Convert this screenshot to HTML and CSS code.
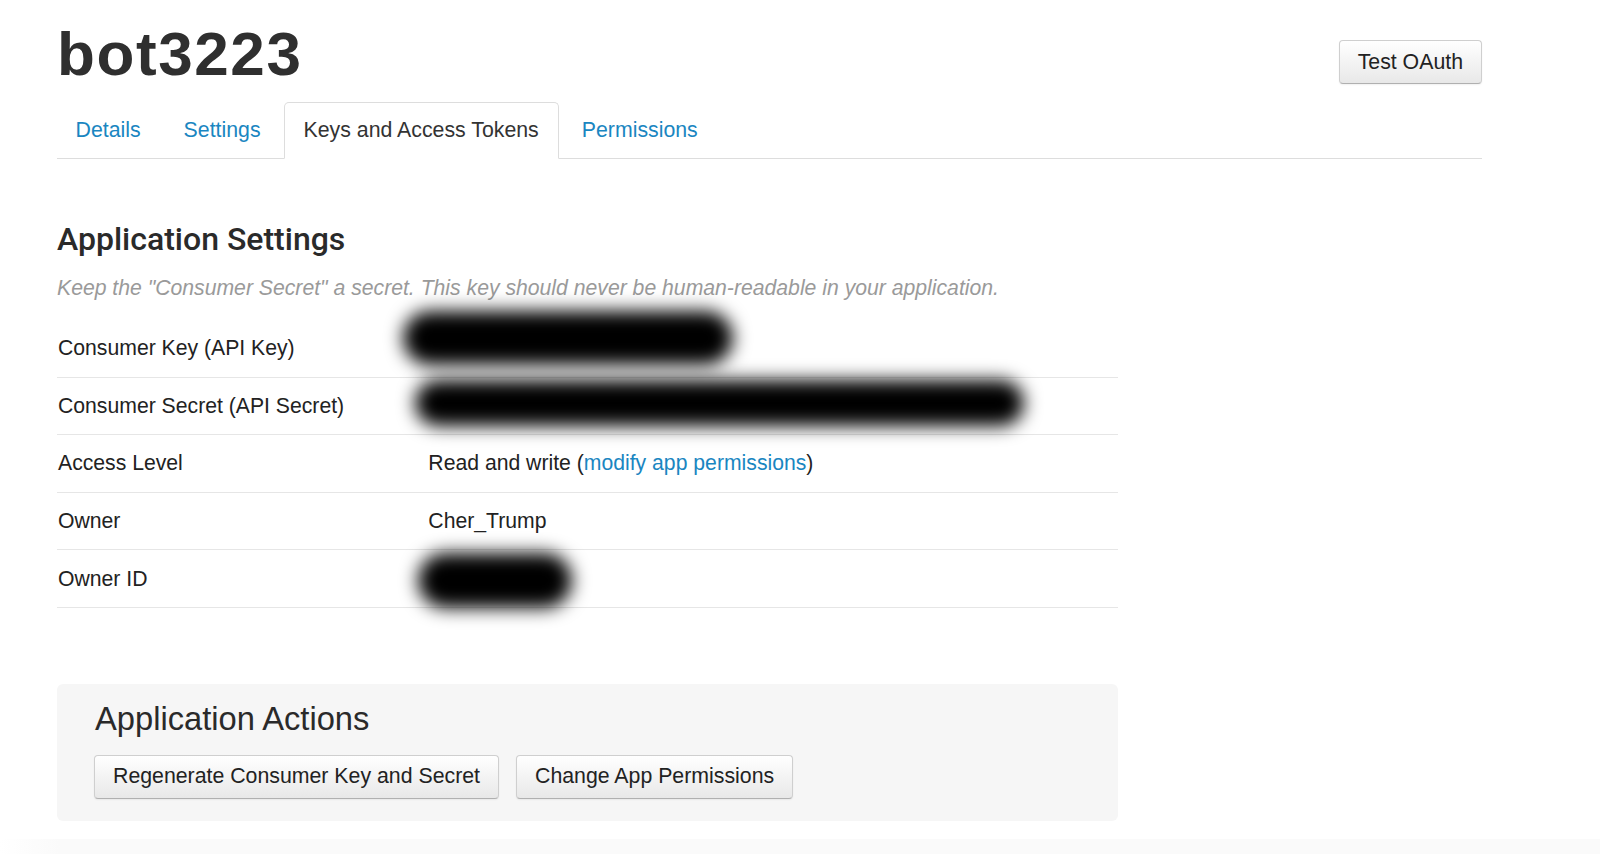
FILE: index.html
```html
<!DOCTYPE html>
<html lang="en">
<head>
<meta charset="utf-8">
<title>bot3223 - Keys and Access Tokens</title>
<link rel="stylesheet" href="styles.css">
</head>
<body>
<div class="page">
  <header class="app-header">
    <h1 class="app-title">bot3223</h1>
    <button class="btn btn-oauth" type="button">Test OAuth</button>
  </header>

  <nav class="tabs">
    <a class="tab" href="#">Details</a>
    <a class="tab" href="#">Settings</a>
    <a class="tab tab-active" href="#">Keys and Access Tokens</a>
    <a class="tab" href="#">Permissions</a>
  </nav>

  <section class="main-col">
    <h2 class="section-title">Application Settings</h2>
    <p class="section-note">Keep the "Consumer Secret" a secret. This key should never be human-readable in your application.</p>

    <div class="settings">
      <div class="row">
        <div class="label">Consumer Key (API Key)</div>
        <div class="value"><span class="redact redact-key"></span></div>
      </div>
      <div class="row">
        <div class="label">Consumer Secret (API Secret)</div>
        <div class="value"><span class="redact redact-secret"></span></div>
      </div>
      <div class="row">
        <div class="label">Access Level</div>
        <div class="value">Read and write (<a class="link" href="#">modify app permissions</a>)</div>
      </div>
      <div class="row">
        <div class="label">Owner</div>
        <div class="value">Cher_Trump</div>
      </div>
      <div class="row">
        <div class="label">Owner ID</div>
        <div class="value"><span class="redact redact-id"></span></div>
      </div>
    </div>

    <div class="actions">
      <h3 class="actions-title">Application Actions</h3>
      <div class="actions-buttons">
        <button class="btn" type="button">Regenerate Consumer Key and Secret</button>
        <button class="btn" type="button">Change App Permissions</button>
      </div>
    </div>
  </section>
</div>
<div class="footer-fade"></div>
</body>
</html>
```

FILE: styles.css
```css
html, body {
  margin: 0;
  padding: 0;
  background: #fff;
}

body {
  font-family: "Liberation Sans", Arial, Helvetica, sans-serif;
  color: #292f33;
  overflow: hidden;
  height: 854px;
}

.page {
  width: 1425px;
  padding-left: 57px;
}

.app-header {
  display: flex;
  justify-content: space-between;
  align-items: flex-start;
  padding-top: 23px;
}

.app-title {
  margin: 0;
  font-family: "Liberation Sans", Arial, sans-serif;
  font-weight: bold;
  font-size: 62px;
  line-height: 62px;
  letter-spacing: 1.6px;
  color: #2f2f2f;
}

.btn {
  font-family: "Liberation Sans", Arial, Helvetica, sans-serif;
  font-size: 21.3px;
  color: #222;
  height: 44px;
  padding: 0 18px;
  border: 1px solid #cfcfcf;
  border-bottom-color: #b0b0b0;
  border-radius: 4px;
  background: linear-gradient(#ffffff, #e8e8e8);
  box-shadow: 0 1px 2px rgba(0, 0, 0, 0.06);
  cursor: pointer;
}

.btn-oauth {
  margin-top: 17px;
  padding: 0 18px;
}

.tabs {
  display: flex;
  margin-top: 17px;
  border-bottom: 1px solid #dddddd;
}

.tab {
  display: block;
  padding: 0 19px;
  margin-right: 3px;
  margin-bottom: -1px;
  line-height: 55px;
  font-size: 21.3px;
  color: #1a86c1;
  text-decoration: none;
  border: 1px solid transparent;
  border-radius: 5px 5px 0 0;
}

.tab:first-child {
  margin-left: -1.5px;
}

.tab-active {
  color: #333;
  background: #fff;
  border-color: #dddddd;
  border-bottom-color: #fff;
}

.main-col {
  width: 1061px;
}

.section-title {
  margin: 62px 0 0;
  font-family: Roboto, "Liberation Sans", sans-serif;
  font-weight: 500;
  font-size: 32px;
  line-height: 36px;
  color: #2a2a2a;
}

.section-note {
  margin: 19px 0 0;
  font-size: 21.2px;
  line-height: 24px;
  font-style: italic;
  color: #9a9a9a;
}

.settings {
  margin-top: 20px;
}

.row {
  display: flex;
  align-items: center;
  box-sizing: border-box;
  height: 57.6px;
  border-bottom: 1px solid #e6e6e6;
  font-size: 21.2px;
  color: #222;
}

.label {
  width: 35%;
  flex: none;
  padding-left: 1px;
  box-sizing: border-box;
}

.value {
  position: relative;
  flex: 1;
  align-self: stretch;
  display: flex;
  align-items: center;
}

.link {
  color: #1a86c1;
  text-decoration: none;
}

.redact {
  position: absolute;
  background: #000;
  border-radius: 40px;
  filter: blur(9px);
}

.redact-key {
  left: -25px;
  top: -9px;
  width: 330px;
  height: 54px;
}

.redact-secret {
  left: -13px;
  top: 2px;
  width: 609px;
  height: 46px;
}

.redact-id {
  left: -10px;
  top: 3px;
  width: 154px;
  height: 55px;
}

.actions {
  margin-top: 76px;
  background: #f6f6f6;
  border-radius: 6px;
  padding: 17px 36px 22px 38px;
}

.actions-title {
  margin: 0;
  font-weight: normal;
  font-size: 32.7px;
  line-height: 36px;
  color: #2a2a2a;
}

.actions-buttons {
  display: flex;
  gap: 17px;
  margin-top: 18px;
  margin-left: -1px;
}

.footer-fade {
  margin-top: 18px;
  height: 40px;
  background: linear-gradient(to right, #ffffff 0, #fafafa 60px, #fafafa 100%);
}
```
